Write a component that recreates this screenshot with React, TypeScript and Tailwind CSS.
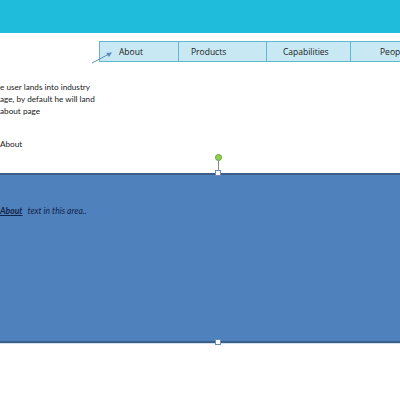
import React from "react";

const tabs = [
  { label: "About", w: "w-[80px]", pad: "pl-[19px]" },
  { label: "Products", w: "w-[88px]", pad: "pl-[12px]" },
  { label: "Capabilities", w: "w-[84px]", pad: "pl-[16px]" },
  { label: "People", w: "w-[80px]", pad: "pl-[29px]" },
];

export default function App() {
  return (
    <div className="relative flex h-[400px] w-[400px] flex-col overflow-hidden bg-white font-['Open_Sans',sans-serif] text-[8.5px] text-[#1a1a1a]">
      {/* top banner */}
      <div className="h-[33px] shrink-0 bg-[#1fbcdb]" />

      {/* nav strip */}
      <nav className="mt-[8px] flex h-[21px] shrink-0 pl-[99px]">
        {tabs.map((t, i) => (
          <div
            key={t.label}
            className={`flex shrink-0 items-center justify-start border-y border-[#5fb8cc] bg-[#c8e8f4] pt-px ${t.w} ${t.pad} ${
              i === 0 ? "border-l" : ""
            } ${i < tabs.length - 1 ? "border-r" : ""}`}
          >
            {t.label}
          </div>
        ))}
      </nav>

      {/* arrow pointing at About tab */}
      <svg className="absolute left-[90px] top-[48px]" width="26" height="18" viewBox="0 0 26 18">
        <line x1="2" y1="15" x2="21" y2="5" stroke="#5a8ec2" strokeWidth="1" />
        <path d="M22 4.5 L16 5 L19 9 Z" fill="#5a8ec2" />
      </svg>

      {/* description */}
      <div className="mt-[19px] flex flex-col font-['Lato',sans-serif] text-[8.2px] leading-[12px]">
        <p>e user lands into industry</p>
        <p>age, by default he will land</p>
        <p>about page</p>
        <p className="mt-[21px]">About</p>
      </div>

      {/* content area */}
      <section className="mt-[23px] h-[170px] shrink-0 border-y-2 border-[#3b5f88] bg-[#4f81bd] pt-[30px]">
        <p className="flex gap-[5px] font-['Lato',sans-serif] text-[8.6px] italic text-[#13244a]">
          <span className="font-bold underline">About</span>
          <span>text in this area..</span>
        </p>
      </section>
      <div className="h-px shrink-0 bg-[#cfe2f3]" />

      {/* selection handles */}
      <div className="absolute left-[215px] top-[154px] h-[7px] w-[7px] rounded-full border border-[#6aa23a] bg-[#8fd14f]" />
      <div className="absolute left-[218px] top-[161px] h-[10px] w-px bg-[#8a8a8a]" />
      <div className="absolute left-[215px] top-[170px] h-[6px] w-[6px] border border-[#6a8db5] bg-white" />
      <div className="absolute left-[215px] top-[339px] h-[6px] w-[6px] border border-[#6a8db5] bg-white" />
    </div>
  );
}
